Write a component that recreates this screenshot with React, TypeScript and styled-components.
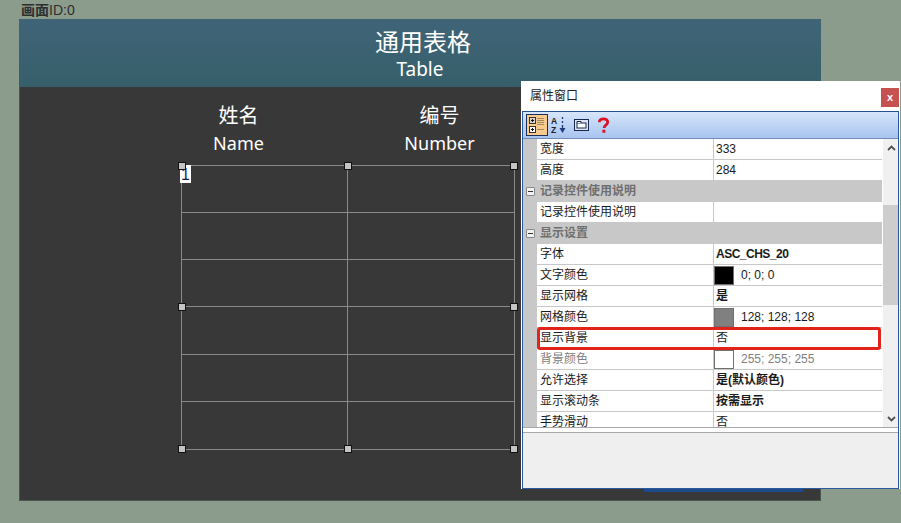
import React from 'react';
import styled, { createGlobalStyle } from 'styled-components';

const CJK = `"Noto Sans", "Noto Sans CJK SC", sans-serif`;
const UI = `"Liberation Sans", "Noto Sans CJK SC", sans-serif`;

const GlobalStyle = createGlobalStyle`
  html, body { margin: 0; padding: 0; background: #8c9c8c; }
  body { width: 901px; height: 523px; overflow: hidden; font-family: ${UI}; }
`;

const Page = styled.div`
  position: relative;
  width: 901px;
  height: 523px;
  box-sizing: border-box;
  padding: 3px 0 0 19px;
  background: #8c9c8c;
`;

const ScreenLabel = styled.div`
  height: 16px;
  padding-left: 2px;
  font-size: 14px;
  line-height: 15px;
  color: #2e2e2e;

  b {
    font-weight: 700;
  }
`;

const Screen = styled.div`
  position: relative;
  width: 802px;
  height: 482px;
  background: #383838;
  box-shadow: inset 0 0 0 1px #4a5650;
`;

const Banner = styled.header`
  height: 68px;
  box-sizing: border-box;
  padding: 7px 0 0 6px;
  background: linear-gradient(#3f6478, #375f6a);
  color: #fff;
  text-align: center;
  font-family: ${CJK};
`;

const BannerTitle = styled.div`
  font-family: ${UI};
  font-size: 24px;
  line-height: 34px;
`;

const BannerSub = styled.div`
  font-size: 19px;
  line-height: 19px;
  margin-left: -6px;
`;

const ColumnHeads = styled.div`
  display: grid;
  grid-template-columns: 201px 201px;
  padding: 14px 0 0 119px;
  height: 64px;
  color: #fff;
  text-align: center;
  font-family: ${CJK};
`;

const Head = styled.div`
  font-size: 20px;
  line-height: 29px;
`;

const HeadSub = styled.div`
  font-size: 18px;
  line-height: 27px;
`;

const Table = styled.div`
  position: relative;
  display: grid;
  grid-template-columns: 166px 167px;
  grid-auto-rows: 47.17px;
  width: 334px;
  margin-left: 162px;
  box-sizing: border-box;
  border: 1px solid #8a8a8a;
`;

const Cell = styled.div<{ $last: boolean; $bottom: boolean }>`
  box-sizing: border-box;
  border-right: ${p => (p.$last ? 'none' : '1px solid #8a8a8a')};
  border-bottom: ${p => (p.$bottom ? 'none' : '1px solid #8a8a8a')};
`;

const RowTag = styled.div`
  position: absolute;
  left: -2px;
  top: -1px;
  width: 11px;
  height: 18px;
  background: #fff;
  color: #0d1a5c;
  font-size: 16px;
  line-height: 20px;
  text-align: center;
`;

const Handle = styled.span<{ $x: number; $y: number }>`
  position: absolute;
  left: ${p => p.$x}%;
  top: ${p => p.$y}%;
  width: 6px;
  height: 6px;
  margin: -4px 0 0 -4px;
  background: #c4c4c4;
  border: 1px solid #111;
`;

const ShadowStrip = styled.div`
  position: absolute;
  left: 625px;
  bottom: 9px;
  width: 159px;
  height: 3px;
  background: #1d4a8a;
`;

const Window = styled.aside`
  position: absolute;
  left: 521px;
  top: 81px;
  width: 379px;
  height: 408px;
  background: #fff;
  display: flex;
  flex-direction: column;
`;

const TitleBar = styled.div`
  display: flex;
  align-items: flex-start;
  justify-content: space-between;
  height: 30px;
  flex: none;
  padding: 0 1px 0 9px;
  font-size: 12px;
  line-height: 30px;
  color: #222;
`;

const CloseButton = styled.div`
  width: 18px;
  height: 19px;
  margin-top: 7px;
  background: #c75050;
  color: #fff;
  font-size: 11px;
  font-weight: 700;
  line-height: 18px;
  text-align: center;
`;

const Frame = styled.div`
  flex: 1;
  display: flex;
  flex-direction: column;
  margin: 0 1px 0 1px;
  border: 1px solid #2a5a9c;
  border-top: none;
`;

const Toolbar = styled.div`
  display: flex;
  align-items: center;
  height: 28px;
  flex: none;
  padding-left: 3px;
  box-sizing: border-box;
  border-top: 1px solid #24508c;
  border-bottom: 1px solid #6f8cb4;
  background: linear-gradient(#d6e5fa, #a8c4f0);
`;

const ToolButton = styled.div<{ $active?: boolean }>`
  display: flex;
  align-items: center;
  justify-content: center;
  width: 22px;
  height: 22px;
  box-sizing: border-box;
  border: 1px solid ${p => (p.$active ? '#1c2f5c' : 'transparent')};
  background: ${p => (p.$active ? '#fac98c' : 'transparent')};
`;

const GridArea = styled.div`
  display: flex;
  height: 288px;
  flex: none;
  overflow: hidden;
  border-bottom: 1px solid #a8a8a8;
`;

const Rows = styled.div`
  width: 359px;
  flex: none;
`;

const Row = styled.div<{ $group?: boolean }>`
  position: relative;
  display: grid;
  grid-template-columns: 14px 176px 169px;
  height: 21px;
  box-sizing: border-box;
  background: ${p => (p.$group ? '#c8c8c8' : '#fff')};
  font-size: 12px;
  line-height: 20px;
`;

const Gutter = styled.div`
  display: flex;
  align-items: center;
  justify-content: center;
  background: #c8c8c8;
`;

const Collapse = styled.span`
  width: 9px;
  height: 9px;
  box-sizing: border-box;
  border: 1px solid #8a8a8a;
  border-radius: 1px;
  background: #f0f0f0;
  display: flex;
  align-items: center;
  justify-content: center;

  &::after {
    content: '';
    width: 5px;
    height: 1px;
    background: #333;
  }
`;

const GroupLabel = styled.div`
  grid-column: 2 / 4;
  padding-left: 3px;
  font-weight: 700;
  color: #6f6f6f;
`;

const Label = styled.div<{ $muted?: boolean }>`
  padding-left: 3px;
  border-bottom: 1px solid #c8c8c8;
  color: ${p => (p.$muted ? '#808080' : '#1a1a1a')};
`;

const Value = styled.div<{ $bold?: boolean; $muted?: boolean; $tight?: boolean }>`
  display: flex;
  align-items: center;
  gap: 7px;
  padding-left: 2px;
  border-left: 1px solid #c8c8c8;
  border-bottom: 1px solid #c8c8c8;
  letter-spacing: ${p => (p.$tight ? '-0.5px' : 'normal')};
  font-weight: ${p => (p.$bold ? 700 : 400)};
  color: ${p => (p.$muted ? '#808080' : '#1a1a1a')};
`;

const Swatch = styled.span<{ $color: string }>`
  width: 20px;
  height: 19px;
  flex: none;
  box-sizing: border-box;
  margin-left: -2px;
  border: 1px solid #707070;
  background: ${p => p.$color};
`;

const Highlight = styled.div`
  position: absolute;
  z-index: 1;
  left: 14px;
  right: 1px;
  top: -1px;
  height: 23px;
  box-sizing: border-box;
  border: 3px solid #e2231a;
  border-radius: 3px;
`;

const Scrollbar = styled.div`
  width: 16px;
  flex: none;
  margin-left: 1px;
  display: flex;
  flex-direction: column;
  background: #f0f0f0;
`;

const Arrow = styled.div`
  display: flex;
  align-items: center;
  justify-content: center;
  height: 17px;
  flex: none;
`;

const Track = styled.div`
  flex: 1;
  padding-top: 49px;
`;

const Thumb = styled.div`
  height: 100px;
  background: #cdcdcd;
`;

const Description = styled.div`
  flex: 1;
  margin-top: 4px;
  border-top: 1px solid #a8a8a8;
  background: #efefef;
`;

type PropRow =
  | { group: string }
  | { label: string; value?: string; bold?: boolean; tight?: boolean; muted?: boolean; swatch?: string; marked?: boolean };

const rows: PropRow[] = [
  { label: '宽度', value: '333' },
  { label: '高度', value: '284' },
  { group: '记录控件使用说明' },
  { label: '记录控件使用说明' },
  { group: '显示设置' },
  { label: '字体', value: 'ASC_CHS_20', bold: true, tight: true },
  { label: '文字颜色', value: '0; 0; 0', swatch: '#000' },
  { label: '显示网格', value: '是', bold: true },
  { label: '网格颜色', value: '128; 128; 128', swatch: '#808080' },
  { label: '显示背景', value: '否', marked: true },
  { label: '背景颜色', value: '255; 255; 255', swatch: '#fff', muted: true },
  { label: '允许选择', value: '是(默认颜色)', bold: true },
  { label: '显示滚动条', value: '按需显示', bold: true },
  { label: '手势滑动', value: '否' },
];

const handles = [
  [0, 0], [50, 0], [100, 0],
  [0, 50], [100, 50],
  [0, 100], [50, 100], [100, 100],
];

const CategoryIcon = () => (
  <svg width="18" height="18" viewBox="0 0 18 18">
    <rect x="1.5" y="1.5" width="6" height="6" fill="#d8d8d8" stroke="#333" />
    <path d="M3 4.5h3M4.5 3v3" stroke="#111" />
    <rect x="1.5" y="10.5" width="6" height="6" fill="#fff" stroke="#333" />
    <path d="M3 13.5h3M4.5 12v3" stroke="#111" />
    <path d="M9 2.5h7M9 4.5h7M9 6.5h7M9 8.5h7M9 13.5h7" stroke="#a08a60" />
  </svg>
);

const SortIcon = () => (
  <svg width="16" height="18" viewBox="0 0 16 18">
    <text x="0" y="7.5" fontSize="8.5" fontWeight="700" fontFamily="Liberation Sans" fill="#222">A</text>
    <text x="0" y="17.3" fontSize="8.5" fontWeight="700" fontFamily="Liberation Sans" fill="#222">Z</text>
    <path d="M11.5 1v2M11.5 5v2M11.5 9v4" stroke="#1c3c78" strokeWidth="1.3" />
    <path d="M8.5 12h6l-3 5z" fill="#1c3c78" />
  </svg>
);

const PagesIcon = () => (
  <svg width="15" height="12" viewBox="0 0 15 12">
    <rect x="0.5" y="0.5" width="14" height="11" fill="#dfe6f2" stroke="#16264e" />
    <rect x="3" y="4" width="9" height="5" fill="#fff" stroke="#16264e" />
    <path d="M3 4V2.5h4V4" fill="#fff" stroke="#16264e" />
  </svg>
);

const App: React.FC = () => (
  <Page>
    <GlobalStyle />
    <ScreenLabel>
      <b>画面</b>ID:0
    </ScreenLabel>
    <Screen>
      <Banner>
        <BannerTitle>通用表格</BannerTitle>
        <BannerSub>Table</BannerSub>
      </Banner>
      <ColumnHeads>
        <div>
          <Head>姓名</Head>
          <HeadSub>Name</HeadSub>
        </div>
        <div>
          <Head>编号</Head>
          <HeadSub>Number</HeadSub>
        </div>
      </ColumnHeads>
      <Table>
        {Array.from({ length: 12 }, (_, i) => (
          <Cell key={i} $last={i % 2 === 1} $bottom={i >= 10} />
        ))}
        <RowTag>1</RowTag>
        {handles.map(([x, y]) => (
          <Handle key={`${x}-${y}`} $x={x} $y={y} />
        ))}
      </Table>
      <ShadowStrip />
    </Screen>

    <Window>
      <TitleBar>
        属性窗口
        <CloseButton>x</CloseButton>
      </TitleBar>
      <Frame>
        <Toolbar>
          <ToolButton $active>
            <CategoryIcon />
          </ToolButton>
          <ToolButton>
            <SortIcon />
          </ToolButton>
          <ToolButton>
            <PagesIcon />
          </ToolButton>
          <ToolButton>
            <svg width="13" height="17" viewBox="0 0 14 18">
              <path d="M2.5 5.5C2.5 3 4.5 1.8 7 1.8s4.5 1.4 4.5 3.6c0 3-3.8 3.2-3.8 6.3" fill="none" stroke="#dd1020" strokeWidth="3" />
              <rect x="5.8" y="13.6" width="3.2" height="3.2" fill="#dd1020" />
            </svg>
          </ToolButton>
        </Toolbar>
        <GridArea>
          <Rows>
            {rows.map(row =>
              'group' in row ? (
                <Row key={row.group} $group>
                  <Gutter>
                    <Collapse />
                  </Gutter>
                  <GroupLabel>{row.group}</GroupLabel>
                </Row>
              ) : (
                <Row key={row.label}>
                  <Gutter />
                  <Label $muted={row.muted}>{row.label}</Label>
                  <Value $bold={row.bold} $muted={row.muted} $tight={row.tight}>
                    {row.swatch && <Swatch $color={row.swatch} />}
                    {row.value}
                  </Value>
                  {row.marked && <Highlight />}
                </Row>
              ),
            )}
          </Rows>
          <Scrollbar>
            <Arrow>
              <svg width="9" height="6" viewBox="0 0 9 6">
                <path d="M1 5l3.5-3.5L8 5" fill="none" stroke="#505050" strokeWidth="1.8" />
              </svg>
            </Arrow>
            <Track>
              <Thumb />
            </Track>
            <Arrow>
              <svg width="9" height="6" viewBox="0 0 9 6">
                <path d="M1 1l3.5 3.5L8 1" fill="none" stroke="#505050" strokeWidth="1.8" />
              </svg>
            </Arrow>
          </Scrollbar>
        </GridArea>
        <Description />
      </Frame>
    </Window>
  </Page>
);

export default App;
